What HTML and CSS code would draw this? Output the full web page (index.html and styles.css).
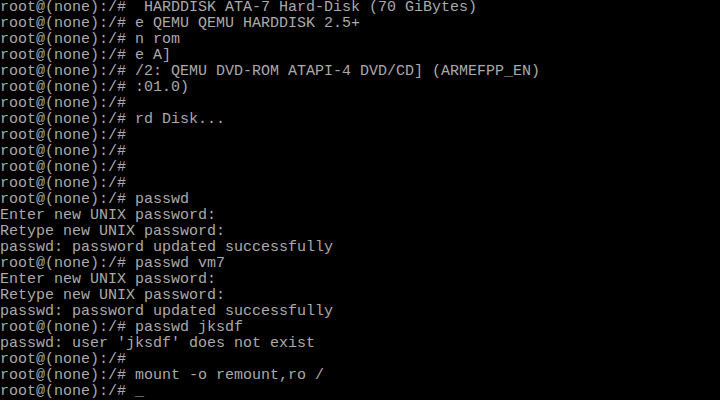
FILE: index.html
```html
<!DOCTYPE html>
<html>
<head>
<meta charset="utf-8">
<link rel="stylesheet" href="styles.css">
</head>
<body>
<pre class="console">root@(none):/#  HARDDISK ATA-7 Hard-Disk (70 GiBytes)
root@(none):/# e QEMU QEMU HARDDISK 2.5+
root@(none):/# n rom
root@(none):/# e A]
root@(none):/# /2: QEMU DVD-ROM ATAPI-4 DVD/CD] (ARMEFPP_EN)
root@(none):/# :01.0)
root@(none):/#
root@(none):/# rd Disk...
root@(none):/#
root@(none):/#
root@(none):/#
root@(none):/#
root@(none):/# passwd
Enter new UNIX password:
Retype new UNIX password:
passwd: password updated successfully
root@(none):/# passwd vm7
Enter new UNIX password:
Retype new UNIX password:
passwd: password updated successfully
root@(none):/# passwd jksdf
passwd: user 'jksdf' does not exist
root@(none):/#
root@(none):/# mount -o remount,ro /
root@(none):/# _</pre>
</body>
</html>
```
FILE: styles.css
```css
html, body {
  margin: 0;
  padding: 0;
  background: #000;
  width: 720px;
  height: 400px;
  overflow: hidden;
}
.console {
  margin: 0;
  padding: 0;
  color: #aaaaaa;
  font-family: "Liberation Mono", "DejaVu Sans Mono", monospace;
  font-size: 15px;
  line-height: 16px;
  white-space: pre;
}
```
